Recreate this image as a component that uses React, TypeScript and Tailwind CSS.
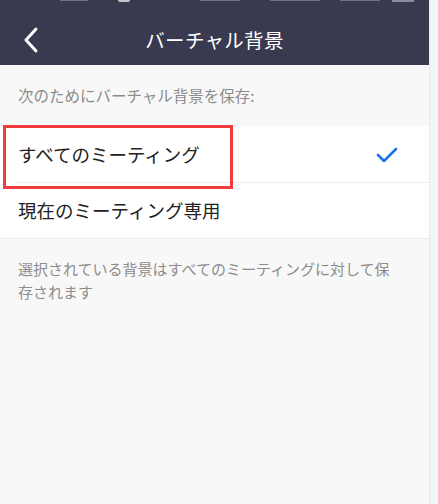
import React from "react";

export default function App() {
  const font = { fontFamily: '"Noto Sans CJK JP", "Noto Sans", sans-serif' };
  return (
    <div className="w-[438px] h-[504px] flex bg-[#f4f5f9] overflow-hidden" style={font}>
      <div className="w-[430px] h-full flex flex-col bg-[#f8f8f8] border-r border-[#ebebef]">
        {/* header */}
        <div className="relative h-[65px] bg-[#393a4f] flex justify-center shrink-0">
          <div className="absolute top-0 left-0 right-0 h-[2px] flex items-start opacity-70">
            <div className="ml-[60px] w-[28px] h-[1px] bg-[#8a8aa0]" />
            <div className="ml-[30px] w-[12px] h-[2px] rounded-b-full bg-white" />
            <div className="ml-[70px] w-[40px] h-[1px] bg-[#8a8aa0]" />
            <div className="ml-[30px] w-[50px] h-[1px] bg-[#8a8aa0]" />
            <div className="ml-[20px] w-[40px] h-[1px] bg-[#8a8aa0]" />
            <div className="ml-[12px] w-[22px] h-[2px] bg-[#b0b0c0]" />
          </div>
          <svg className="absolute left-[22px] top-[26px]" width="18" height="28" viewBox="0 0 18 28">
            <path d="M14 3 L4 14 L14 25" fill="none" stroke="white" strokeWidth="3" strokeLinecap="round" strokeLinejoin="round" />
          </svg>
          <span className="text-white text-[19.5px] leading-none tracking-[0.3px] pt-[30px]">バーチャル背景</span>
        </div>
        {/* section header */}
        <div className="h-[61px] flex items-center pl-[18px] text-[#8c8c8c] text-[15.5px]">
          次のためにバーチャル背景を保存:
        </div>
        {/* rows */}
        <div className="bg-white border-b border-[#ececec]">
          <div className="relative h-[57px] flex items-center pl-[18px] pr-[30px]">
            <span className="text-[#222] text-[18.5px] flex-1">すべてのミーティング</span>
            <svg width="24" height="20" viewBox="0 0 24 20" className="mr-[0px]">
              <path d="M3 10 L9 16 L21 4" fill="none" stroke="#1a73e8" strokeWidth="2.6" strokeLinecap="round" strokeLinejoin="round" />
            </svg>
            <div className="absolute left-[16px] right-0 bottom-0 h-px bg-[#ececec]" />
            <div className="absolute left-[3px] top-[-1px] w-[230px] h-[64px] border-[3px] border-[#f03c3c]" />
          </div>
          <div className="h-[55px] flex items-center pl-[18px]">
            <span className="text-[#222] text-[18.5px]">現在のミーティング専用</span>
          </div>
        </div>
        {/* footer */}
        <div className="pt-[18px] pl-[18px] pr-[30px] text-[#8c8c8c] text-[15px] leading-[23px]">
          選択されている背景はすべてのミーティングに対して保存されます
        </div>
      </div>
    </div>
  );
}
